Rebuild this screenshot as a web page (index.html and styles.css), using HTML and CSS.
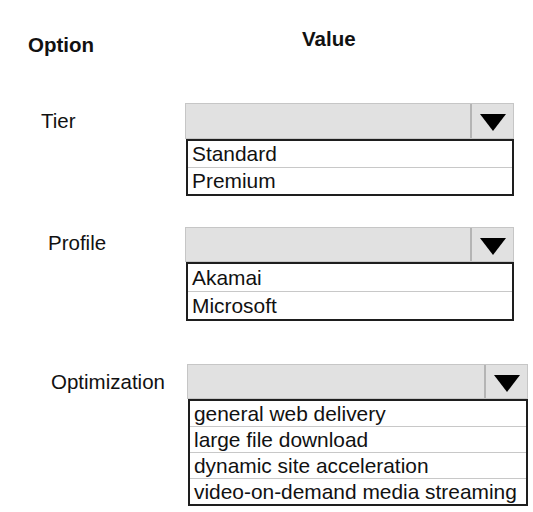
FILE: index.html
```html
<!DOCTYPE html>
<html>
<head>
<meta charset="utf-8">
<link rel="stylesheet" href="styles.css">
</head>
<body>
<div class="page">
  <div class="header">
    <div class="h-option">Option</div>
    <div class="h-value">Value</div>
  </div>

  <div class="group group-tier">
    <div class="label label-tier">Tier</div>
    <div class="select"><div class="select-field"></div><div class="select-btn"><span class="arrow"></span></div></div>
    <div class="list list-tier">
      <div class="row">Standard</div>
      <div class="row">Premium</div>
    </div>
  </div>

  <div class="group group-profile">
    <div class="label label-profile">Profile</div>
    <div class="select"><div class="select-field"></div><div class="select-btn"><span class="arrow"></span></div></div>
    <div class="list list-profile">
      <div class="row">Akamai</div>
      <div class="row">Microsoft</div>
    </div>
  </div>

  <div class="group group-opt">
    <div class="label label-opt">Optimization</div>
    <div class="select"><div class="select-field"></div><div class="select-btn"><span class="arrow"></span></div></div>
    <div class="list list-opt">
      <div class="row">general web delivery</div>
      <div class="row">large file download</div>
      <div class="row">dynamic site acceleration</div>
      <div class="row">video-on-demand media streaming</div>
    </div>
  </div>
</div>
</body>
</html>
```

FILE: styles.css
```css
html, body {
  margin: 0;
  padding: 0;
  background: #ffffff;
}

.page {
  font-family: "Liberation Sans", Arial, sans-serif;
  font-size: 20.5px;
  line-height: 24px;
  color: #111111;
  padding-top: 27px;
}

.header {
  display: flex;
  align-items: flex-start;
  font-weight: bold;
}

.h-option {
  width: 274px;
  padding-left: 28px;
  margin-top: 6px;
}

.h-value {
  margin-top: 0;
}

.group {
  display: grid;
  grid-template-rows: auto auto;
}

.group-tier {
  margin-top: 46px;
  grid-template-columns: 185px 329px;
}

.group-profile {
  margin-top: 31px;
  grid-template-columns: 185px 329px;
}

.group-opt {
  margin-top: 43px;
  grid-template-columns: 187px 341px;
}

.label {
  grid-column: 1;
  grid-row: 1;
  align-self: center;
}

.label-tier { padding-left: 41px; }
.label-profile { padding-left: 48px; margin-top: -4px; }
.label-opt { padding-left: 51px; }

.select {
  grid-column: 2;
  grid-row: 1;
  display: flex;
  height: 35px;
  box-sizing: border-box;
  border: 1px solid #c6c6c6;
  background: #e1e1e1;
}

.group-tier .select { height: 36px; }

.select-field {
  flex: 1;
}

.select-btn {
  width: 41px;
  border-left: 2px solid #b4b4b4;
  display: flex;
  align-items: center;
  justify-content: center;
}

.arrow {
  width: 0;
  height: 0;
  border-left: 13px solid transparent;
  border-right: 13px solid transparent;
  border-top: 17px solid #000;
  margin-top: 3px;
}

.list {
  grid-column: 2;
  grid-row: 2;
  margin-left: 1px;
  border: 2px solid #1e1e1e;
  background: #fff;
  font-size: 20.9px;
}

.row {
  height: 26px;
  line-height: 26px;
  padding-left: 4px;
  white-space: nowrap;
}

.row + .row {
  border-top: 1px solid #c8c8c8;
}

.list-profile .row {
  height: 27px;
  line-height: 27px;
}

.list-opt .row {
  height: 25px;
  line-height: 25px;
}
```
